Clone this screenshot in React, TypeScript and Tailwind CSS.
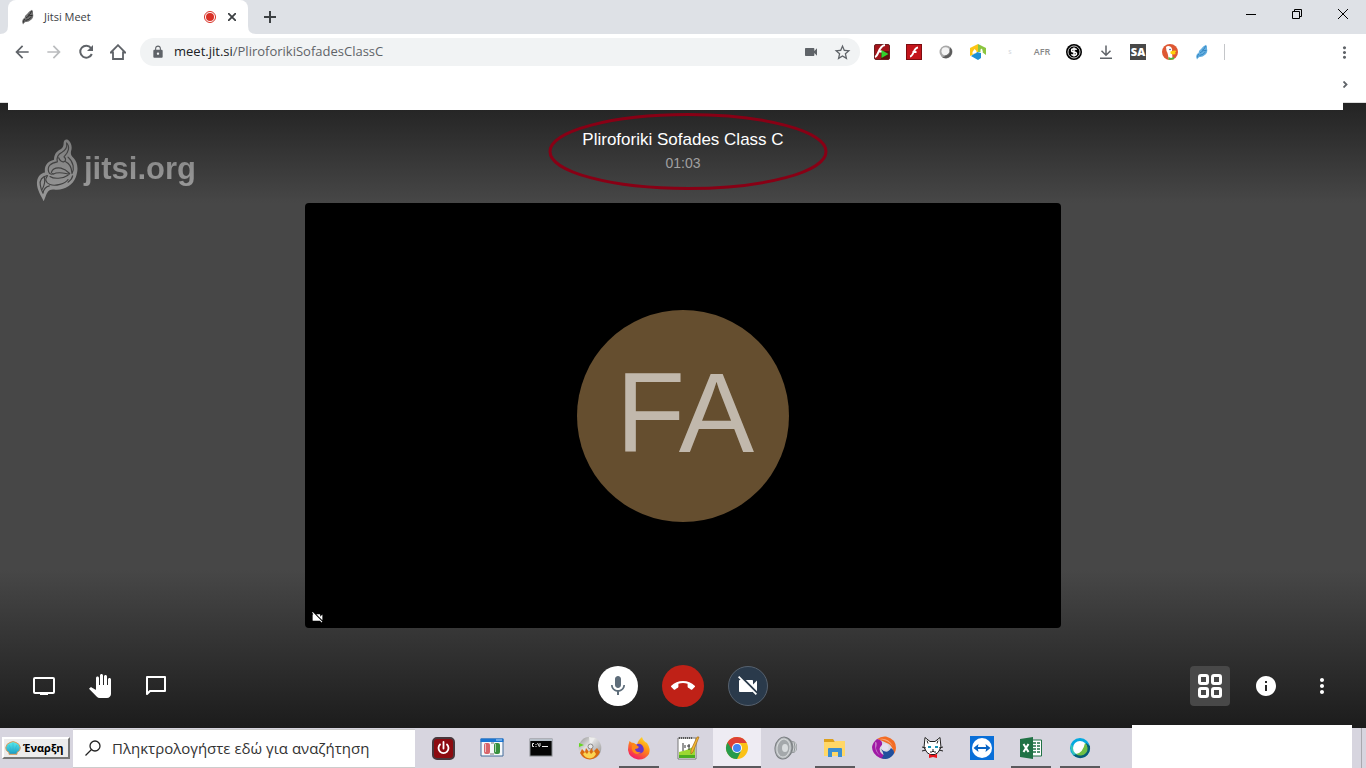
import type { ReactNode } from "react";
import {
  MdArrowBack,
  MdArrowForward,
  MdCallEnd,
  MdInfo,
  MdLock,
  MdMic,
  MdMoreVert,
  MdPanTool,
  MdStarBorder,
  MdVideocam,
  MdVideocamOff,
} from "react-icons/md";

type Item = { label: string; icon: ReactNode };
type TaskItem = Item & { state?: "open" | "active" };

function Feather({ body, line }: { body: string; line: string }) {
  return (
    <svg viewBox="0 0 16 16" className="h-4 w-4">
      <path
        d="M3 15.500Q1.500 13 2.500 11Q3 9.500 4.500 9Q4.500 6.500 7 5Q9 2 12 .8Q13.500 2.500 13 4.500Q14 8 11.500 10.500Q8 13.500 5.500 13Q4 13.500 3 15.500Z"
        fill={body}
      />
      <path
        d="M11.500 2Q11 5 8 6.500M6 9Q9 5.500 12.500 6.500M5.500 11.500Q9 11 11.500 8M3.500 13.500Q3.500 11 5 10"
        fill="none"
        stroke={line}
        strokeWidth=".9"
      />
    </svg>
  );
}

function JitsiLogo() {
  return (
    <svg viewBox="50 28 126 188" className="h-[63px] w-[42px]" aria-hidden="true">
      <defs>
        <linearGradient id="logo" x1="0" x2="0" y1="0" y2="1">
          <stop offset="0" stopColor="#7c7c7c" />
          <stop offset="1" stopColor="#999" />
        </linearGradient>
      </defs>
      <path
        d="M73 214C66 198 51 178 53 156C55 139 65 130 77 128C74 108 84 95 104 90C104 72 112 64 124 58C131 53 133 48 133 38C134 27 144 27 149 33C157 42 159 54 155 64C154 72 154 76 162 84C176 98 178 120 169 143C160 167 132 183 104 179C88 177 83 188 79 199Z"
        fill="url(#logo)"
      />
      <g fill="none" stroke="#424242" strokeLinejoin="round" strokeLinecap="round" strokeWidth="3.500">
        <path d="M142 40C144 52 139 61 128 67C116 73 111 82 114 96C94 99 83 110 88 126C91 134 97 134 101 131M84 137C68 140 60 152 63 166C64 176 68 184 71 190C73 178 79 170 90 168" />
        <path d="M142 40C152 50 149 66 134 81M118 84C121 91 126 97 133 96C140 94 140 87 136 83M146 82C164 98 165 118 158 131C157 112 150 101 139 96" />
        <path d="M96 128C100 116 112 113 125 115C137 118 144 124 151 131M101 133C118 124 132 130 150 133M84 138C76 148 79 160 92 164C108 170 138 162 146 149M92 140C104 148 130 147 146 136M75 143C78 153 74 168 69 178M146 157C154 151 159 144 160 138" />
      </g>
    </svg>
  );
}

const extensions: Item[] = [
  {
    label: "Flash player launcher",
    icon: (
      <svg viewBox="0 0 16 16" className="h-4 w-4">
        <rect x=".5" y=".5" width="15" height="15" rx="1.500" fill="#a3141a" stroke="#6b2020" />
        <path d="M7 7h8v8H7z" fill="#5c1210" />
        <path d="M1 13C5 12 4 2 11 1M4 7.500h4" stroke="#fff" strokeWidth="2" fill="none" />
        <path d="M7.500 6l7 4-7 4z" fill="#32d22c" />
      </svg>
    ),
  },
  {
    label: "Flash",
    icon: (
      <svg viewBox="0 0 16 16" className="h-4 w-4">
        <rect x=".5" y=".5" width="15" height="15" fill="#c3151b" stroke="#7e0c10" />
        <path d="M4 12.500C8 12 7 4 12 3.500M6.500 8h4" stroke="#fff" strokeWidth="1.800" fill="none" />
      </svg>
    ),
  },
  {
    label: "Webex",
    icon: (
      <svg viewBox="0 0 16 16" className="h-4 w-4">
        <circle cx="8" cy="8" r="6.500" fill="#a8a8a8" />
        <path d="M12.500 3.500A6.500 6.500 0 0 1 4 13.200Q9 13 12.500 3.500Z" fill="#5c5c5c" />
        <circle cx="7.500" cy="7.300" r="4" fill="#f4f4f4" />
        <path d="M11.500 6.500Q11 11 6.500 11.500Q12 13 11.500 6.500Z" fill="#6d6d6d" />
      </svg>
    ),
  },
  {
    label: "Meeting cube",
    icon: (
      <svg viewBox="0 0 16 16" className="h-4 w-4">
        <path d="M0 4l8-4v8L0 12z" fill="#fdc513" />
        <path d="M8 0l8 4v7l-4-3-4 0z" fill="#8bc53f" />
        <path d="M1 12l6-4 4 1v5l-3 2z" fill="#1d8fd4" />
        <path d="M2.500 8l2-3 2 2v2l-4 1zM10.500 8V5.500l1.500-1 1 4z" fill="#fff" />
      </svg>
    ),
  },
  { label: "Inactive extension", icon: <span className="text-[7px] text-gray-300">s</span> },
  { label: "AFR", icon: <span className="text-[9px] font-semibold text-[#888]">AFR</span> },
  {
    label: "Prices",
    icon: (
      <svg viewBox="0 0 16 16" className="h-4 w-4">
        <circle cx="8" cy="8" r="8" fill="#000" />
        <circle cx="8" cy="8" r="6" fill="none" stroke="#ddd" strokeWidth=".9" />
        <path d="M10.500 5.800Q10 4.800 8 4.800Q5.600 4.800 5.600 6.400Q5.600 7.800 8 8T10.500 9.700Q10.500 11.300 8 11.300Q6 11.300 5.500 10.200M8 3.500v9" fill="none" stroke="#fff" strokeWidth="1.500" />
      </svg>
    ),
  },
  {
    label: "Downloads",
    icon: (
      <svg viewBox="0 0 16 16" className="h-4 w-4" fill="none" stroke="#5f6368" strokeWidth="1.500">
        <path d="M8 1.500V11M3.500 6.800L8 11.300l4.500-4.500M2 14.200h12" />
      </svg>
    ),
  },
  {
    label: "SA",
    icon: (
      <span className="flex h-4 w-4 items-center justify-center bg-[#484848] font-['Open_Sans',sans-serif] text-[11px] leading-4 font-extrabold text-white">
        SA
      </span>
    ),
  },
  {
    label: "DuckDuckGo",
    icon: (
      <svg viewBox="0 0 16 16" className="h-4 w-4">
        <circle cx="8" cy="8" r="8" fill="#de5833" />
        <path d="M4 3Q6 1 9 3Q11 5 10 8L10.500 14.500Q8 15.500 6.500 14.500Q6 9 4.500 7Z" fill="#fff" />
        <path d="M8.500 7.500Q13 6 14.500 7Q12 9 14 10Q11 11 8.500 9.500Z" fill="#fdd20a" />
        <circle cx="8" cy="5.500" r=".8" fill="#2d4f8e" />
        <path d="M6.500 13l2.500 1 3-1v2.200Q9 16 6.500 15.500z" fill="#4cba3c" />
      </svg>
    ),
  },
  { label: "Jitsi Meetings", icon: <Feather body="#64afe0" line="#2d7fbd" /> },
];

const taskItems: TaskItem[] = [
  {
    label: "Power",
    icon: (
      <svg viewBox="0 0 24 24" className="h-6 w-6">
        <rect x="2" y="2" width="21" height="21" rx="4" fill="#8d0b10" stroke="#47383d" strokeWidth="2" />
        <path d="M9 8.500a5 5 0 1 0 7 0M12.500 6v6.500" fill="none" stroke="#fff" strokeWidth="1.800" strokeLinecap="round" />
      </svg>
    ),
  },
  {
    label: "Resource monitor",
    icon: (
      <svg viewBox="0 0 24 24" className="h-6 w-6">
        <path d="M1 3h22v17H1z" fill="#f5f8fb" stroke="#436d9a" />
        <path d="M.5 2.500h23v3.500H.5z" fill="#1b75d1" />
        <path d="M16 3.500h6v1h-6z" fill="#b8ddff" />
        <rect x="4" y="7" width="6" height="11" rx="2" fill="#d9656b" />
        <rect x="14" y="7" width="6" height="11" rx="2" fill="#38903e" />
        <path d="M5.500 8v8M15.500 8v8" stroke="#f5ffff" strokeOpacity=".6" />
        <path d="M10 18h4M11 7h3" stroke="#777" />
      </svg>
    ),
  },
  {
    label: "Command prompt",
    icon: (
      <svg viewBox="0 0 24 24" className="h-6 w-6">
        <rect x="1" y="3" width="22" height="17" fill="#050505" stroke="#85898d" />
        <path d="M1 3h22v2H1z" fill="#b7c0c9" />
        <path d="M5 7.500H3.500v3H5M7 8v1M7 10v1M8.500 7l2 4M11 7v3M13 10.500h6" stroke="#eee" fill="none" />
      </svg>
    ),
  },
  {
    label: "Disc burner",
    icon: (
      <svg viewBox="0 0 24 24" className="h-6 w-6">
        <defs>
          <linearGradient id="disc" x1="0" y1="0" x2="1" y2="1">
            <stop offset="0" stopColor="#8d8d8d" />
            <stop offset=".4" stopColor="#e2e2e2" />
            <stop offset="1" stopColor="#8a8a8a" />
          </linearGradient>
        </defs>
        <circle cx="12" cy="12" r="11.300" fill="url(#disc)" />
        <path d="M11 1l1 9 5-8z" fill="#ededed" />
        <circle cx="12.500" cy="10.500" r="2.500" fill="#e9e9e9" stroke="#888" />
        <path d="M1 7l5 2-5 2z" fill="#64d820" />
        <path d="M2 17l2-4 3 3 1-4 3 4 3-4 1 4 4-4 3 4Q19 23 12 23.500Q5 23 2 17z" fill="#d96b12" />
        <path d="M5 18l2-2 2 2 2-3 2 3 3-3 2 3Q16 22 12 22.500Q7 22 5 18z" fill="#fbd452" />
      </svg>
    ),
  },
  {
    label: "Firefox",
    state: "open",
    icon: (
      <svg viewBox="0 0 24 24" className="h-6 w-6">
        <defs>
          <linearGradient id="fox" x1=".8" y1="0" x2=".25" y2="1">
            <stop offset="0" stopColor="#ffe226" />
            <stop offset=".45" stopColor="#ff8a16" />
            <stop offset="1" stopColor="#f3126d" />
          </linearGradient>
        </defs>
        <path d="M2.500 5Q4 7 7 7L10 9Q11 4 15 1Q16 5 20 7Q24 13 22 18Q18 24 11 23.500Q2 22 1 14Q1 9 2.500 5Z" fill="url(#fox)" />
        <path d="M8 10Q11 6 15 9Q18 13 16 16Q12 19 8 16Q6 13 8 10Z" fill="#6937c9" />
        <path d="M5 9Q8 7 12 11Q11 13 8 13Q9 17 14 16Q10 20 6 16Q4 13 5 9Z" fill="#ff8a17" />
      </svg>
    ),
  },
  {
    label: "Text editor",
    icon: (
      <svg viewBox="0 0 24 24" className="h-6 w-6">
        <path d="M2 2h18v21H2z" fill="#fff" stroke="#777" />
        <path d="M3 16Q12 14 19 10v12H3z" fill="#9cd832" />
        <path d="M3 19h16v3H3z" fill="#4bad22" />
        <path d="M3 2h14" stroke="#555" strokeWidth="2" strokeDasharray="1 1" />
        <path d="M7 7v8M9 9v3M11 10h3M13 8v6" stroke="#333" fill="none" />
        <path d="M23 1l-6 15-2 2v-4l6-13z" fill="#f4b830" stroke="#a26a1e" strokeWidth=".7" />
      </svg>
    ),
  },
  {
    label: "Google Chrome",
    state: "active",
    icon: (
      <svg viewBox="0 0 24 24" className="h-6 w-6">
        <circle cx="12" cy="12" r="11" fill="#fbc116" />
        <path d="M12 12L2.470 6.500A11 11 0 0 0 12 23L16.330 14.500z" fill="#279b4c" />
        <path d="M2.470 6.500A11 11 0 0 1 21.800 7H12L7.670 14.500z" fill="#dd4036" />
        <circle cx="12" cy="12" r="5" fill="#fff" />
        <circle cx="12" cy="12" r="4" fill="#4285f4" />
      </svg>
    ),
  },
  {
    label: "Speaker",
    icon: (
      <svg viewBox="0 0 24 24" className="h-6 w-6">
        <path d="M11 1Q16 2 18 5Q23 5 23 11Q23 17 18 17Q16 21 10 22.500z" fill="#8f9396" />
        <path d="M19 6Q21 11 19 16M21 6Q23 11 21 16" stroke="#cfd2d4" fill="none" />
        <ellipse cx="9.500" cy="12" rx="8.500" ry="11" transform="rotate(8 9 12)" fill="#b3b7ba" stroke="#7b7f82" />
        <ellipse cx="9.500" cy="12" rx="6.500" ry="9" transform="rotate(8 9 12)" fill="#a4a8ab" stroke="#d7dadb" />
        <ellipse cx="11" cy="12" rx="3" ry="4" fill="#d9dcde" />
      </svg>
    ),
  },
  {
    label: "File explorer",
    state: "open",
    icon: (
      <svg viewBox="0 0 24 24" className="h-6 w-6">
        <path d="M1 3h9l2 3h10v14H1z" fill="#dda01c" />
        <path d="M1 6h10l2-1h9v15H1z" fill="#ffd766" />
        <path d="M5 13q0-1 1-1h12q1 0 1 1v8h-4v-5H9v5H5z" fill="#3c8ed0" />
      </svg>
    ),
  },
  {
    label: "Swirl",
    icon: (
      <svg viewBox="0 0 24 24" className="h-6 w-6">
        <path d="M5 3Q9 0 14 .5Q24 3 24 12Q24 15 22 18Q21 11 17 8Q11 5 5 3Z" fill="#f36c24" />
        <path d="M5 3Q11 4 10 9Q5 13 10 18Q14 21 19 20Q14 24 8 22Q0 18 0 11Q1 6 5 3Z" fill="#a01aa5" />
        <path d="M9 13Q15 19 19 12Q24 15 21 19Q16 25 9 22Q14 20 9 13Z" fill="#214f9d" />
        <path d="M7 3Q16 1 21 10Q16 4 7 3ZM3 6Q6 5 4 12Q5 17 9 20Q2 17 3 6Z" fill="#fff" fillOpacity=".4" />
        <circle cx="13" cy="11" r="3.500" fill="#e4dfee" />
      </svg>
    ),
  },
  {
    label: "Cat",
    icon: (
      <svg viewBox="0 0 24 24" className="h-6 w-6">
        <path d="M4 1.500l5 4h5l5-4 1 10-3 5-3 2h-5l-3-2-3-5z" fill="#fff" stroke="#222" />
        <path d="M6 4.500l1 3M17 4.500l-1 3M1 11l4 1M1 15l4-1M18 12l4-1M18 14l4 1" stroke="#222" />
        <path d="M7 11h3M14 11h3" stroke="#1894b8" strokeWidth="2" />
        <path d="M11 14h2M9 16h2l1-1 1 1h2" stroke="#222" fill="none" />
        <path d="M8 18l3 1h2l3-1v4l-4-1-4 1z" fill="#ea161d" />
      </svg>
    ),
  },
  {
    label: "TeamViewer",
    icon: (
      <svg viewBox="0 0 24 24" className="h-6 w-6">
        <rect width="24" height="24" fill="#096fd8" />
        <circle cx="12" cy="12" r="10" fill="#fff" />
        <path d="M3.500 12l5-4-.6 3h8.200l-.6-3 5 4-5 4 .6-3H7.900l.6 3z" fill="#0864c4" />
      </svg>
    ),
  },
  {
    label: "Excel",
    state: "open",
    icon: (
      <svg viewBox="0 0 24 24" className="h-6 w-6">
        <path d="M12 4h10.500v16H12z" fill="#fff" stroke="#207245" />
        <path d="M14 7h3M18 7h3M14 10h3M18 10h3M14 13h3M18 13h3M14 16h3M18 16h3" stroke="#207245" strokeWidth="1.600" />
        <path d="M1 3l13-2v22L1 21z" fill="#207245" />
        <path d="M4.500 8l5 8M9.500 8l-5 8" stroke="#fff" strokeWidth="2" />
      </svg>
    ),
  },
  {
    label: "Webex Meetings",
    state: "open",
    icon: (
      <svg viewBox="0 0 24 24" className="h-6 w-6">
        <circle cx="12" cy="12" r="10" fill="#04a9df" />
        <path d="M5 19Q10 24 17 21Q23 17 22 10L18 7Q19 16 5 19Z" fill="#075d78" />
        <path d="M3 8Q2 15 6 19L9 17Z" fill="#38c6b4" />
        <circle cx="12" cy="12" r="7" fill="#fff" />
        <path d="M17 7A7 7 0 0 1 8 18Q15 17 17 7Z" fill="#6fc044" />
      </svg>
    ),
  },
];

function NavButton({ label, children }: { label: string; children: ReactNode }) {
  return (
    <button aria-label={label} className="flex h-8 w-8 items-center justify-center text-[#5f6368]">
      {children}
    </button>
  );
}

function TabStrip() {
  return (
    <div className="flex h-[34px] items-end bg-[#dee1e6] pl-2 text-[#3c4043]">
      <div className="relative flex h-full w-60 items-center rounded-t-lg bg-white pr-2 pl-3">
        <svg viewBox="0 0 8 8" className="absolute bottom-0 -left-2 h-2 w-2">
          <path d="M8 0v8H0q8 0 8-8z" fill="#fff" />
        </svg>
        <svg viewBox="0 0 8 8" className="absolute -right-2 bottom-0 h-2 w-2">
          <path d="M0 0v8h8q-8 0-8-8z" fill="#fff" />
        </svg>
        <Feather body="#707070" line="#252525" />
        <span className="ml-2 flex-1 text-[11px]">Jitsi Meet</span>
        <svg viewBox="0 0 12 12" className="mr-2 h-3 w-3">
          <circle cx="6" cy="6" r="5.500" fill="#fff" stroke="#d93025" />
          <circle cx="6" cy="6" r="4" fill="#d93025" />
        </svg>
        <button aria-label="Close tab" className="flex h-4 w-4 items-center justify-center">
          <svg viewBox="0 0 8 8" className="h-2 w-2" stroke="#3c4043" strokeWidth="1.800">
            <path d="M0 0l8 8M8 0L0 8" />
          </svg>
        </button>
      </div>
      <button aria-label="New tab" className="ml-2 flex h-full w-7 items-center justify-center">
        <svg viewBox="0 0 12 12" className="h-3 w-3" stroke="#3c4043" strokeWidth="2">
          <path d="M6 0v12M0 6h12" />
        </svg>
      </button>
      <div className="ml-auto flex h-full items-start">
        <button aria-label="Minimize" className="flex h-7 w-[46px] items-center justify-center">
          <svg viewBox="0 0 10 10" className="h-[10px] w-[10px]" stroke="#000">
            <path d="M0 5.500h10" />
          </svg>
        </button>
        <button aria-label="Restore" className="flex h-7 w-[46px] items-center justify-center">
          <svg viewBox="0 0 10 10" className="h-[10px] w-[10px]" fill="none" stroke="#000">
            <path d="M.5 2.500h7v7h-7zM2.500 2.500v-2h7v7h-2" />
          </svg>
        </button>
        <button aria-label="Close" className="flex h-7 w-[46px] items-center justify-center">
          <svg viewBox="0 0 10 10" className="h-[10px] w-[10px]" stroke="#000">
            <path d="M0 0l10 10M10 0L0 10" />
          </svg>
        </button>
      </div>
    </div>
  );
}

function AddressBar() {
  return (
    <div className="flex h-9 items-center bg-white px-[6px]">
      <NavButton label="Back">
        <MdArrowBack size={20} />
      </NavButton>
      <NavButton label="Forward">
        <MdArrowForward size={20} className="text-[#babcbe]" />
      </NavButton>
      <NavButton label="Reload">
        <svg viewBox="0 0 16 16" className="h-4 w-4">
          <path d="M13 4A6 6 0 1 0 13.800 10" fill="none" stroke="currentColor" strokeWidth="2" />
          <path d="M15 1v6H9z" fill="currentColor" />
        </svg>
      </NavButton>
      <NavButton label="Home">
        <svg viewBox="0 0 16 16" className="h-4 w-4" fill="none" stroke="currentColor" strokeWidth="1.800">
          <path d="M.8 8.500L8 1.200l7.200 7.300H13V15H3V8.500z" />
        </svg>
      </NavButton>
      <div className="ml-[6px] flex h-7 flex-1 items-center rounded-full bg-[#f1f3f4] pr-2 pl-[11px] text-[#5f6368]">
        <MdLock size={14} />
        <a href="#meeting" className="ml-[9px] flex-1 text-[13px] text-[#5f6368]">
          <span className="text-[#202124]">meet.jit.si</span>/PliroforikiSofadesClassC
        </a>
        <button aria-label="Camera in use" className="mr-[14px]">
          <MdVideocam size={16} />
        </button>
        <button aria-label="Bookmark">
          <MdStarBorder size={19} />
        </button>
      </div>
      <div className="ml-[6px] flex">
        {extensions.map((e) => (
          <NavButton key={e.label} label={e.label}>
            {e.icon}
          </NavButton>
        ))}
      </div>
      <div className="mr-[103px] ml-[6px] h-4 w-px bg-[#c4c6c9]" />
      <NavButton label="Menu">
        <MdMoreVert size={19} />
      </NavButton>
    </div>
  );
}

function ToolButton({ label, className, children }: { label: string; className?: string; children: ReactNode }) {
  return (
    <button aria-label={label} className={`flex items-center justify-center text-white ${className ?? "h-10 w-10"}`}>
      {children}
    </button>
  );
}

function Meeting() {
  return (
    <main className="flex min-h-0 flex-1 flex-col bg-[linear-gradient(to_bottom,#232323_0px,#474747_100px,#474747_calc(100%-158px),#1c1c1c_100%)] font-['Liberation_Sans',Arial,sans-serif]">
      <header className="grid h-[100px] shrink-0 grid-cols-3">
        <div className="flex items-start pt-9 pl-9">
          <JitsiLogo />
          <span className="bg-linear-to-b from-[#7e7e7e] to-[#9a9a9a] bg-clip-text pt-[10px] pl-[6px] text-[31px] leading-10 font-bold text-transparent">
            jitsi.org
          </span>
        </div>
        <div className="relative flex flex-col items-center pt-[25px]">
          <h1 className="text-[17px] leading-6 text-white">Pliroforiki Sofades Class C</h1>
          <p className="text-sm leading-[22px] text-[#a0a0a0]">01:03</p>
          <svg viewBox="0 0 280 77" className="absolute top-[10px] left-1/2 h-[77px] w-[280px] -translate-x-[135px]">
            <ellipse cx="140" cy="38.500" rx="138" ry="37" fill="none" stroke="#880015" strokeWidth="3" />
          </svg>
        </div>
      </header>

      <section className="flex min-h-0 flex-1 justify-center">
        <div className="relative flex aspect-video h-full items-center justify-center rounded bg-black">
          <div className="flex h-[212px] w-[212px] items-center justify-center rounded-full bg-[#654e2f] pb-1 pl-1 text-[113px] leading-none text-[#c1b8ac]">
            FA
          </div>
          <MdVideocamOff size={13} className="absolute bottom-1 left-[6px] text-white" />
        </div>
      </section>

      <footer className="grid h-[100px] shrink-0 grid-cols-[1fr_auto_1fr] items-center px-6 pt-4">
        <div className="flex gap-4">
          <ToolButton label="Share screen">
            <svg viewBox="0 0 24 24" className="h-6 w-6">
              <rect x="2" y="4" width="20" height="15" rx="1" fill="none" stroke="#fff" strokeWidth="2" />
              <path d="M8 19h8v2H8z" fill="#fff" />
            </svg>
          </ToolButton>
          <ToolButton label="Raise hand">
            <MdPanTool size={24} />
          </ToolButton>
          <ToolButton label="Open chat">
            <svg viewBox="0 0 24 24" className="h-6 w-6">
              <path d="M3 3h18v14H6l-3 3z" fill="none" stroke="#fff" strokeWidth="2" strokeLinejoin="round" />
            </svg>
          </ToolButton>
        </div>
        <div className="flex items-center gap-6">
          <ToolButton label="Mute" className="h-10 w-10 rounded-full bg-white">
            <MdMic size={24} className="text-[#5e6d7a]" />
          </ToolButton>
          <ToolButton label="Leave the call" className="h-[42px] w-[42px] rounded-full bg-[#bf2117]">
            <MdCallEnd size={24} />
          </ToolButton>
          <ToolButton label="Start camera" className="h-10 w-10 rounded-full border border-[#56616e] bg-[#2a3a4b]">
            <MdVideocamOff size={24} />
          </ToolButton>
        </div>
        <div className="flex justify-end gap-4">
          <ToolButton label="Toggle tile view" className="h-10 w-10 rounded bg-[#484848]">
            <svg viewBox="0 0 24 24" className="h-6 w-6" fill="none" stroke="#fff" strokeWidth="3">
              <rect x="1.500" y="1.500" width="8" height="8" rx="1.500" />
              <rect x="14.500" y="1.500" width="8" height="8" rx="1.500" />
              <rect x="1.500" y="14.500" width="8" height="8" rx="1.500" />
              <rect x="14.500" y="14.500" width="8" height="8" rx="1.500" />
            </svg>
          </ToolButton>
          <ToolButton label="Meeting info">
            <MdInfo size={24} />
          </ToolButton>
          <ToolButton label="More actions">
            <MdMoreVert size={24} />
          </ToolButton>
        </div>
      </footer>
    </main>
  );
}

function Shell() {
  return (
    <svg viewBox="0 0 16 14" className="h-[14px] w-4 shrink-0">
      <defs>
        <linearGradient id="shell" x1="0" x2="0" y1="0" y2="1">
          <stop offset="0" stopColor="#5df0ee" />
          <stop offset="1" stopColor="#1798c4" />
        </linearGradient>
      </defs>
      <path d="M4 13.300V11.500Q.5 10 .7 6.500Q1.500 2.500 5 1.500Q8-.3 11 1.500Q14.500 2.500 15.300 6.500Q15.500 10 12 11.500V13.300Z" fill="url(#shell)" stroke="#dd9a58" />
      <path d="M7 11L4 4M8 11V2M9 11l3-7" stroke="#2fb4cf" strokeWidth=".5" />
    </svg>
  );
}

function Taskbar() {
  return (
    <nav className="relative flex h-10 shrink-0 items-center bg-[#d7d5df] pl-[2px]">
      <button className="flex h-[22px] w-[68px] items-center gap-[2px] border-2 border-t-white border-r-[#777] border-b-[#777] border-l-white bg-[#ececec] pl-px text-[11px] leading-4 font-bold text-black">
        <Shell />
        Έναρξη
      </button>
      <label className="ml-[3px] flex h-[39px] w-[342px] items-center border-y border-[#ccc] bg-white pl-3">
        <svg viewBox="0 0 16 16" className="h-4 w-4 shrink-0" fill="none" stroke="#222" strokeWidth="1.300">
          <circle cx="10" cy="6" r="5" />
          <path d="M6.500 9.500L.5 15.500" />
        </svg>
        <input
          aria-label="Αναζήτηση"
          placeholder="Πληκτρολογήστε εδώ για αναζήτηση"
          className="ml-[11px] w-full bg-transparent text-[15px] outline-none placeholder:text-[#333]"
        />
      </label>
      <div className="ml-1 flex h-full gap-px">
        {taskItems.map((t) => (
          <button
            key={t.label}
            aria-label={t.label}
            className={`flex h-full w-12 flex-col items-center ${t.state === "active" ? "bg-[#eeecf3]" : ""}`}
          >
            <span className="flex flex-1 items-center pt-[2px]">{t.icon}</span>
            <span
              className={`h-[2px] ${t.state === "active" ? "w-12 bg-[#5b5a5e]" : t.state === "open" ? "w-10 bg-[#5b5a5e]" : "w-10"}`}
            />
          </button>
        ))}
      </div>
      <div className="absolute right-[14px] bottom-0 h-[43px] w-[220px] bg-white" />
      <div className="absolute right-1 bottom-0 h-10 w-px bg-[#a9a8ae]" />
    </nav>
  );
}

export default function App() {
  return (
    <div className="flex h-screen flex-col overflow-hidden bg-white font-['Open_Sans','Noto_Sans',sans-serif]">
      <TabStrip />
      <AddressBar />
      <div className="relative flex h-[33px] shrink-0 items-center justify-end border-b border-[#ddd] bg-white pr-[18px]">
        <div className="absolute top-0 right-[23px] left-2 h-10 bg-white" />
        <button aria-label="More bookmarks" className="relative -mt-1">
          <svg viewBox="0 0 5 7" className="h-[7px] w-[5px]" fill="none" stroke="#5f6368" strokeWidth="1.800">
            <path d="M.5 .5l3 3-3 3" />
          </svg>
        </button>
      </div>
      <Meeting />
      <Taskbar />
    </div>
  );
}
